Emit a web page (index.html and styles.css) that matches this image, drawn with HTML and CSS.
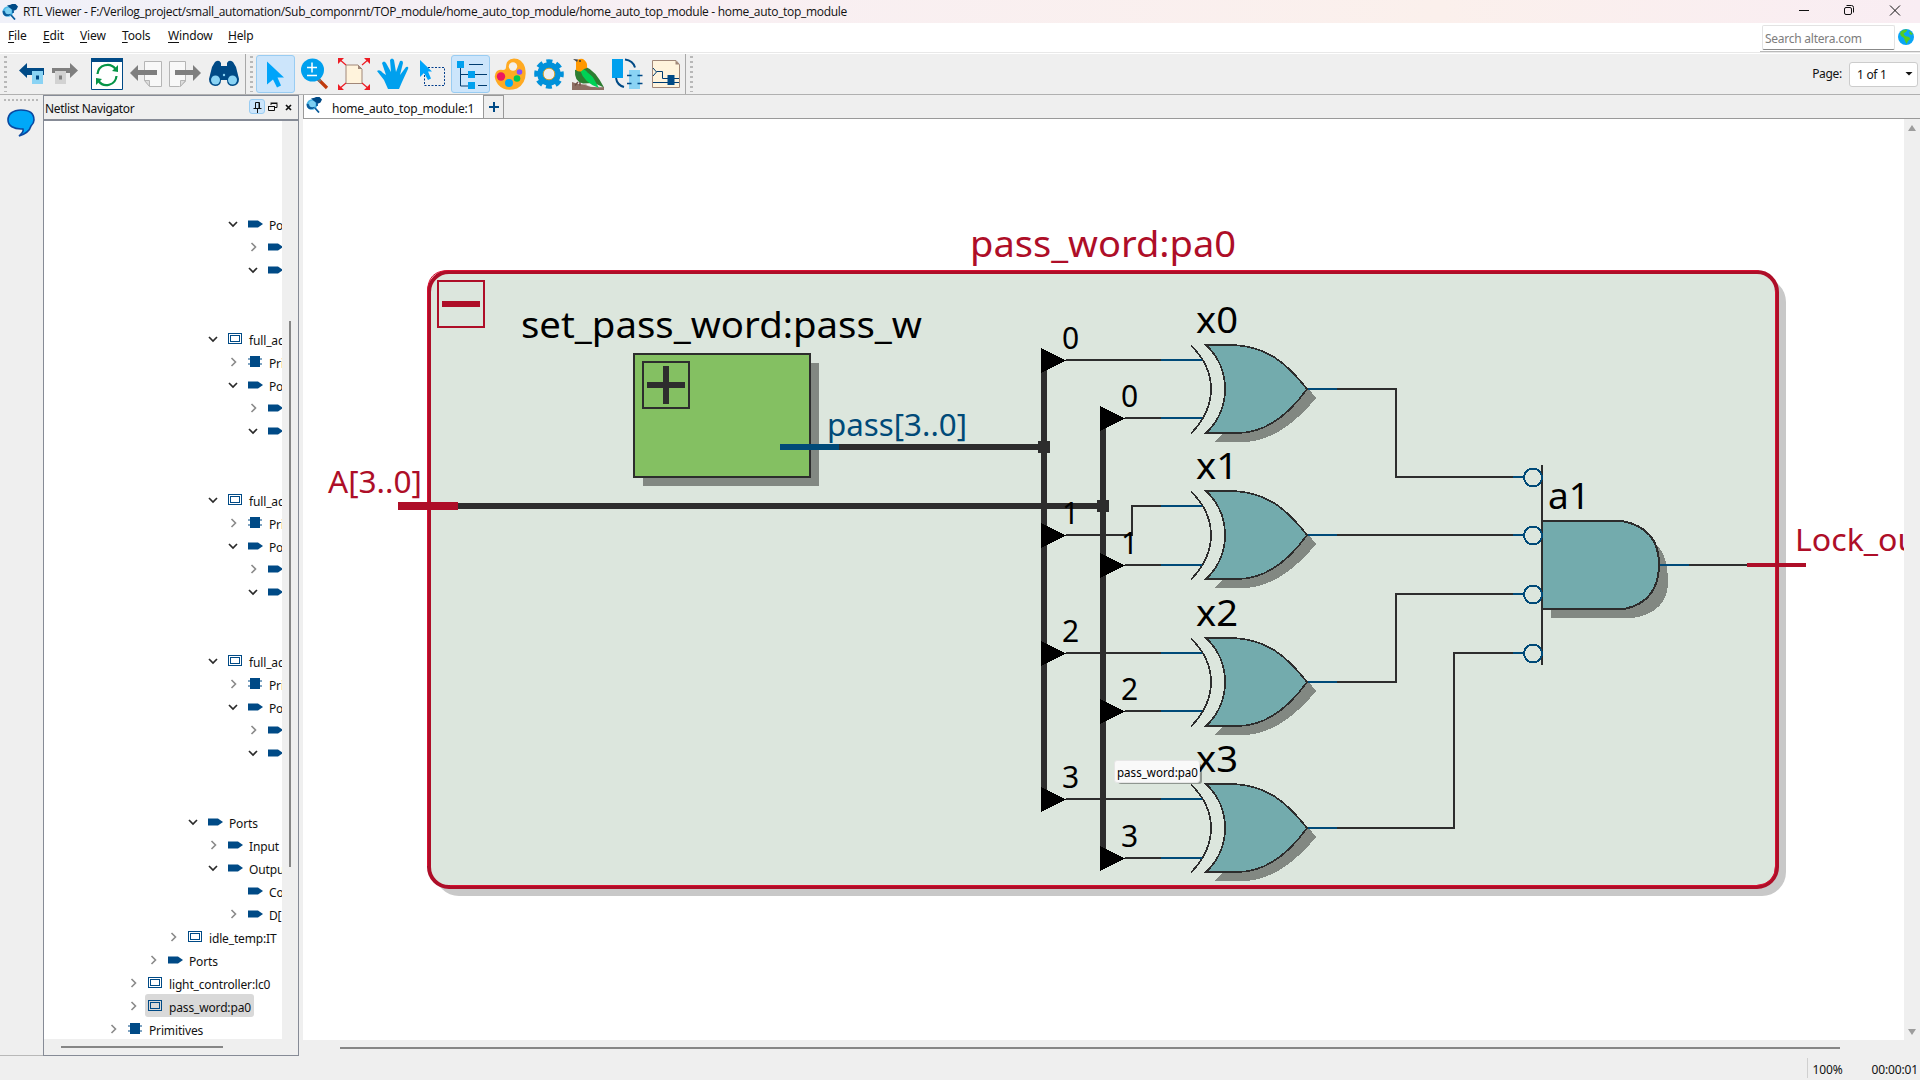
FILE: index.html
```html
<!DOCTYPE html>
<html lang="en">
<head>
<meta charset="utf-8">
<title>RTL Viewer</title>
<link rel="stylesheet" href="styles.css">
</head>
<body>
<svg class="defs" width="0" height="0" aria-hidden="true">
  <symbol id="viewer" viewBox="0 0 16 16"><circle cx="6" cy="7.500" r="5.300" fill="#4cb8e8"/><path d="M.7 6.500a5.300 5.300 0 0 0 3 5.800l3-.3 2.500-2-3-.5-3-2z" fill="#0a5c9c"/><circle cx="6.300" cy="7" r="3.200" fill="#7ed0f2"/><path d="M5 1.500 8.500.8 10 0h3.500L16 2.500l-1.500 3-2 1-2-.5L8 4z" fill="#004a86"/><path d="M11 6v3M9 11l4 4.500" stroke="#0a5c9c" stroke-width="1.800"/></symbol>
  <symbol id="port" viewBox="0 0 15 8"><path d="M0 .5h10l5 3.500-5 3.500H0z" fill="#004a86"/></symbol>
  <symbol id="inst" viewBox="0 0 15 12"><path d="M.5.500h13v10H.5zM2.500 2.500h9v6h-9z" fill="none" stroke="#004a86" shape-rendering="crispEdges"/></symbol>
  <symbol id="chip" viewBox="0 0 15 12"><path d="M2 0h10v11H2zM0 2.500h14v1H0zM0 7.500h14v1H0z" fill="#004a86"/></symbol>
  <symbol id="open" viewBox="0 0 12 12"><path d="m2 4 4 4 4-4" fill="none" stroke="#2a2a2a" stroke-width="1.700"/></symbol>
  <symbol id="shut" viewBox="0 0 12 12"><path d="m4.500 2 4 4-4 4" fill="none" stroke="#8a8a8a" stroke-width="1.600"/></symbol>
</svg>
<div class="app">
  <header class="titlebar">
    <svg class="logo" width="16" height="16"><use href="#viewer"/></svg>
    <span class="title">RTL Viewer - F:/Verilog_project/small_automation/Sub_componrnt/TOP_module/home_auto_top_module/home_auto_top_module - home_auto_top_module</span>
    <svg class="winbtns" width="110" height="23" viewBox="0 0 110 23" fill="none" stroke="#111"><path d="M4 10.500h10"/><rect x="49.500" y="7.500" width="7" height="7" rx="1.500"/><path d="M51.500 5.500h5q2 0 2 2v5"/><path d="m95 5.500 10 10m0-10-10 10"/></svg>
  </header>
  <nav class="menubar">
    <span class="m m1"><u>F</u>ile</span><span class="m m2"><u>E</u>dit</span><span class="m m3"><u>V</u>iew</span><span class="m m4"><u>T</u>ools</span><span class="m m5"><u>W</u>indow</span><span class="m m6"><u>H</u>elp</span>
    <div class="search"><div class="field">Search altera.com</div>
      <svg width="16" height="16" viewBox="0 0 16 16"><circle cx="8" cy="8" r="8" fill="#0aa5f5"/><path d="M3 2.500Q6 0 9.500.8L8 3 5.500 4.500 7 7l4 1 1.500 2L10 12l-1.500 3L7 12 6 9 3 7 2 4.500zM12 2l3 3-2 1-2-2z" fill="#55cc22"/></svg></div>
  </nav>
  <div class="toolbar">
    <i class="grip g1"></i>
    <span class="tool narrow"><svg width="32" height="32" viewBox="0 0 32 32"><path d="M3 12.500 11 5v5h17v7H11v3z" fill="#004a86"/><path d="M16 13h11v13H16z" fill="#8ad3f4"/><path d="M20 17.500h3v4h-3z" fill="#004a86"/></svg></span>
    <span class="tool narrow"><svg width="32" height="32" viewBox="0 0 32 32"><path d="M29 12.500 21 5v5H3v5h18v5z" fill="#7f7f7f"/><path d="M6 13h11v13H6z" fill="#d2d2d2"/><path d="M10 17.500h3v4h-3z" fill="#7f7f7f"/></svg></span>
    <span class="tool first"><svg width="32" height="32" viewBox="0 0 32 32"><path d="M.5.500h31v31H.5z" fill="#fff" stroke="#004a86"/><path d="M0 0h32v4H0z" fill="#004a86"/><path d="M6.500 16a10 10 0 0 1 18-5M25.500 18a10 10 0 0 1-18 5" fill="none" stroke="#069447" stroke-width="2.200"/><path d="m21 13 6 1V7zM11 21l-6-1v7z" fill="#069447"/></svg></span>
    <span class="tool"><svg width="32" height="32" viewBox="0 0 32 32"><path d="M14.500 3.500h17v25H20l-5.500-6z" fill="#f8f8f8" stroke="#b5b5b5"/><path d="M14.500 22.500h5v6z" fill="#ddd" stroke="#b5b5b5"/><path d="m0 15 8-8v5h19v5H8v6z" fill="#7f7f7f"/></svg></span>
    <span class="tool"><svg width="32" height="32" viewBox="0 0 32 32"><path d="M.5 3.500h16v20l-6 5H.5z" fill="#f8f8f8" stroke="#b5b5b5"/><path d="M16.500 22.500h-5v6z" fill="#ddd" stroke="#b5b5b5"/><path d="m32 15-8-8v5H6v5h18v6z" fill="#7f7f7f"/></svg></span>
    <span class="tool"><svg width="32" height="32" viewBox="0 0 32 32"><path d="m1 21 3-12 3-5q4-3 6 1v3h6V5q2-4 6-1l3 5 3 12q0 6-6 7-6 0-6-6h-6q0 6-6 6-6-1-6-7z" fill="#004a86"/><circle cx="7.500" cy="22" r="4.500" fill="#8ad3f4"/><circle cx="24.500" cy="22" r="4.500" fill="#8ad3f4"/><circle cx="16" cy="17" r="1.200" fill="#8ad3f4"/></svg></span>
    <i class="sep s1"></i><i class="grip g2"></i>
    <span class="tool on"><svg width="32" height="32" viewBox="0 0 32 32"><path d="M7 3.500v23l6-5 4 8 4-2-3.500-8H24z" fill="#00a4fa"/></svg></span>
    <span class="tool"><svg width="32" height="32" viewBox="0 0 32 32"><path d="m18 20 10 10" stroke="#c03a0c" stroke-width="3.200"/><path d="m18.500 20.500 3 3" stroke="#777" stroke-width="3"/><circle cx="13.500" cy="12" r="11.500" fill="#00a0ee"/><path d="M8 9.500h10m-5-5v10M8 17.500h10" stroke="#fff" stroke-width="1.500"/></svg></span>
    <span class="tool"><svg width="32" height="32" viewBox="0 0 32 32"><path d="M8 7h12l4 4v14.500H8z" fill="#fff3dc" stroke="#a18778"/><path d="M20 7v4h4z" fill="#a18778"/><path d="m1 1 7 6M31 1l-7 6M1 31l7-6m23 6-7-6" stroke="#ed1c24" stroke-width="1.200"/><path d="M0 0h6L0 6zm32 0h-6l6 6zM0 32h6l-6-6zm32 0h-6l6-6z" fill="#ed1c24"/></svg></span>
    <span class="tool"><svg width="32" height="32" viewBox="0 0 32 32"><path d="M0 13q3-2 6 2l3 2L5 5q2-3 4 0l5 9-1-12q2-3 4 0l2 12 4-11q3-1 3 2l-3 12 6-8q3-1 2 2l-6 13-3 7H11l-4-9z" fill="#00a0ee"/></svg></span>
    <span class="tool"><svg width="32" height="32" viewBox="0 0 32 32"><path d="M8.500 9.500h20v18h-20z" fill="none" stroke="#003c8c" stroke-dasharray="2 1.500"/><path d="M4 2v17l4-4 4 7 3-1.500-3-7h4z" fill="#00a4fa"/></svg></span>
    <span class="tool on"><svg width="32" height="32" viewBox="0 0 32 32"><path d="M5.500 8v20h10M5 16.500h28M14 6.500h14m-5 21h9" fill="none" stroke="#003c70"/><path d="M2 3h7v7H2zM13 13h7v7h-7zM13 24h7v7h-7z" fill="#00a0ee"/></svg></span>
    <span class="tool"><svg width="32" height="32" viewBox="0 0 32 32"><path d="M12 9Q12 1 20 .5q8 0 11 9 3 15-8 21-12 4-19-4Q-2 18 3 13q3-2 6-1 3 0 3-3z" fill="#ffaa22"/><circle cx="19" cy="8.500" r="4.200" fill="#f3efe9"/><circle cx="7" cy="18.500" r="4.200" fill="#ee1760"/><circle cx="15" cy="25" r="4" fill="#00a7f5"/><circle cx="23" cy="20.500" r="3.300" fill="#00c853"/><circle cx="25.500" cy="14" r="2.800" fill="#8350ff"/></svg></span>
    <span class="tool"><svg width="32" height="32" viewBox="0 0 32 32"><circle cx="16" cy="16" r="12.800" fill="none" stroke="#0091da" stroke-width="4" stroke-dasharray="6 4.050" stroke-dashoffset="3"/><circle cx="16" cy="16" r="8.500" fill="#eee" stroke="#0091da" stroke-width="6.500"/><circle cx="16" cy="16" r="5.800" fill="#eee" stroke="#d7a12b"/></svg></span>
    <span class="tool"><svg width="32" height="32" viewBox="0 0 32 32"><path d="M0 24q7 3 14 2.500 4 3 18 2.500v3H0z" fill="#8d6e63"/><path d="M13 27q8 1 14-3l5 5q-12 1-19-2z" fill="#e8e8e8"/><path d="M3 27.500 6 24m2 3.500V24" fill="none" stroke="#704f46" stroke-width="1.500"/><path d="M3 12q-1 12 8 13.500l11-.5 10 4.500Q23 12 14 9z" fill="#2d7d32"/><path d="m9 9 11 8.500 7 12.500Q12 25 8 12z" fill="#00d155"/><path d="m14 9 9 9 4 6-12-10z" fill="#2d7d32"/><path d="M4 4q2-4 7-3 5 3 4 9l-3 1-3 2.500q-6 .5-5-4z" fill="#ff9800"/><path d="m1 1 5 .5-1 2.500z" fill="#444"/><circle cx="8" cy="3" r="1" fill="#333"/></svg></span>
    <span class="tool"><svg width="32" height="32" viewBox="0 0 32 32"><path d="M1 1h11v19H1z" fill="#00a0ee"/><path d="M14 1.500q8 1 10 8M5 20q1 7 8 9" fill="none" stroke="#004a86" stroke-width="2"/><path d="M18 12h11v19H18z" fill="#8ad3f4"/><path d="M16 17.500h4.500m-4.500 8h4.500m6-8h5m-5 8h5" stroke="#004a86" stroke-width="1.500"/></svg></span>
    <span class="tool"><svg width="32" height="32" viewBox="0 0 32 32"><path d="M2.500 2.500H26l3.500 4v23h-27z" fill="#fff3dc" stroke="#a18778"/><path d="M25.500 2.500v4h4z" fill="#a18778"/><path d="M3 24.500h26M3 10l3.500 4L3 18M6.500 13.500h6v7H29" fill="none" stroke="#003c70"/><path d="M17.500 17h7v10h-7z" fill="#004a86"/></svg></span>
    <i class="sep s2"></i><i class="grip g3"></i>
    <div class="page"><span>Page:</span><div class="combo">1 of 1<b></b></div></div>
  </div>
  <main class="work">
    <aside class="strip"><i class="hgrip"></i><svg width="28" height="30" viewBox="0 0 28 30"><path d="M14 1C6 1 1 5 1 11c0 6 6 9 13 9h2q1 3-4 7 10-3 12-10 3-3 3-6 0-10-13-10z" fill="#00a8f8" stroke="#0a48a0" stroke-width="1.600"/></svg></aside>
    <section class="dock">
      <div class="dockhead"><span>Netlist Navigator</span>
        <b class="pin"><svg width="16" height="15" viewBox="0 0 16 15" fill="none" stroke="#111"><path d="M6.500 8V2.500h4V8M4.500 8.500h8M8.500 8.500V13M10 3v5"/></svg></b>
        <svg class="flt" width="10" height="10" viewBox="0 0 10 10" fill="none" stroke="#111"><path d="M.5 4.500h6v4h-6zM3 3V1.500h6v4H7M0 4.500h7M2.500 1h7"/></svg>
        <svg class="cls" width="7" height="7" viewBox="0 0 7 7"><path d="m1 1 5 5m0-5-5 5" stroke="#111" stroke-width="1.700"/></svg>
      </div>
      <div class="dockbody">
        <div class="tree" id="tree"></div>
        <i class="vthumb"></i>
      </div>
      <div class="dockfoot"><i></i></div>
    </section>
    <section class="view">
      <div class="tabs"><div class="tab"><svg width="16" height="16"><use href="#viewer"/></svg><span>home_auto_top_module:1</span></div><div class="add"><svg width="10" height="10" viewBox="0 0 10 10"><path d="M5 0v10M0 5h10" stroke="#004a86" stroke-width="2"/></svg></div></div>
      <div class="canvasrow">
        <svg class="canvas" width="1601" height="921" viewBox="303 119 1601 921">
          <defs>
            <g id="xor">
              <path d="M1215 442q16-15 19-30l26-14 49-9 7 9q-36 44-74 44z" fill="#828882"/>
              <path d="M1206 345h28C1266 347 1285 361 1307 389 1285 420 1262 433 1237 433h-31Q1225 415 1225 389T1206 345z" fill="#73abad" stroke="#2d2d2d" stroke-width="1.700"/>
              <path d="M1191 345.500Q1211 365 1211 389T1191 433.500" fill="none" stroke="#2d2d2d" stroke-width="1.700"/>
              <path d="M1308 389h29M1161 360h41" stroke="#004a78" stroke-width="2"/>
            </g>
            <path id="tap" d="M0-12.500 25 0 0 12.500z"/>
          </defs>
          <rect x="435" y="278" width="1351" height="618" rx="24" fill="#c8c8c8"/>
          <rect x="429" y="272" width="1348" height="615" rx="20" fill="#dce6dd" stroke="#ae0e28" stroke-width="4"/>
          <path d="M427.500 866V292q0-21.500 21-21.500h1310M1775.500 290v576q0 18-19 19.500H450" fill="none" stroke="#d80f31" stroke-width="1"/>
          <g shape-rendering="crispEdges">
            <path d="M438 281h46v46h-46z" fill="none" stroke="#ae0e28" stroke-width="2"/><path d="M442 301h38v6h-38z" fill="#ae0e28"/>
            <path d="M643 363h176v123H643z" fill="#828882"/>
            <path d="M634 354h176v123H634z" fill="#84c062" stroke="#2d2d2d" stroke-width="2"/>
            <path d="M643 362h46v46h-46z" fill="none" stroke="#2d2d2d" stroke-width="2"/>
            <path d="M647 382h38v6h-38zM663 366h6v38h-6z" fill="#2d2d2d"/>
            <g fill="none" stroke="#2d2d2d" stroke-width="6"><path d="M839 447h205M458 506h645M1044 360v439M1103 418v440"/></g>
            <path d="M1038 441h12v12h-12zM1097 500h12v12h-12z" fill="#2d2d2d"/>
            <g fill="none" stroke="#2d2d2d" stroke-width="2">
              <path d="M1066 360h95M1066 535h66v-29h29M1066 653h95M1066 799h95M1125 418h36M1125 565h36M1125 711h36M1125 858h36"/>
              <path d="M1337 389h59v88h117M1337 535h176M1337 682h59v-88h117M1337 828h117V653h59M1689 565h58"/>
            </g>
            <path d="M780 447h59" stroke="#004a78" stroke-width="6"/>
            <path d="M398 506h60" stroke="#ae0e28" stroke-width="8"/>
            <use href="#tap" x="1041" y="360.500"/><use href="#tap" x="1041" y="535.500"/><use href="#tap" x="1041" y="653.500"/><use href="#tap" x="1041" y="799.500"/>
            <use href="#tap" x="1100" y="418.500"/><use href="#tap" x="1100" y="565.500"/><use href="#tap" x="1100" y="711.500"/><use href="#tap" x="1100" y="858.500"/>
            <use href="#xor"/><use href="#xor" y="146"/><use href="#xor" y="293"/><use href="#xor" y="439"/>
            <path d="M1161 418h41M1161 565h41M1161 711h41M1161 858h41" stroke="#004a78" stroke-width="2"/>
            <path d="M1551 610h71l34-44v-22q12 12 12 38 0 30-35 36h-82z" fill="#828882"/>
            <path d="M1542 521h80q37 7 37 43 0 38-35 45h-82z" fill="#73abad" stroke="#2d2d2d" stroke-width="2"/>
            <path d="M1542 465v200" stroke="#2d2d2d" stroke-width="2"/>
            <g fill="none" stroke="#004a78" stroke-width="2"><circle cx="1533" cy="477.500" r="9"/><circle cx="1533" cy="535.500" r="9"/><circle cx="1533" cy="594.500" r="9"/><circle cx="1533" cy="653.500" r="9"/><path d="M1513 477h11M1513 535h11M1513 594h11M1513 653h11M1660 565h29"/></g>
            <path d="M1747 565h59" stroke="#ae0e28" stroke-width="4"/>
          </g>
          <g class="big">
            <text class="red" x="970" y="256.500" textLength="266" lengthAdjust="spacingAndGlyphs">pass_word:pa0</text>
            <text x="521" y="338" textLength="401" lengthAdjust="spacingAndGlyphs">set_pass_word:pass_w</text>
            <text x="1196" y="332.500" textLength="42" lengthAdjust="spacingAndGlyphs">x0</text><text x="1196" y="479" textLength="42" lengthAdjust="spacingAndGlyphs">x1</text><text x="1196" y="625.500" textLength="42" lengthAdjust="spacingAndGlyphs">x2</text><text x="1196" y="771.500" textLength="42" lengthAdjust="spacingAndGlyphs">x3</text>
            <text x="1548" y="509" textLength="42" lengthAdjust="spacingAndGlyphs">a1</text>
          </g>
          <g class="mid">
            <text class="red" x="328" y="492.500" textLength="94" lengthAdjust="spacingAndGlyphs">A[3..0]</text>
            <text class="blue" x="827" y="435.500" textLength="140" lengthAdjust="spacingAndGlyphs">pass[3..0]</text>
            <text class="red" x="1795" y="550.500" textLength="134" lengthAdjust="spacingAndGlyphs">Lock_out</text>
            <text x="1062" y="348.500">0</text><text x="1062" y="524">1</text><text x="1062" y="641.500">2</text><text x="1062" y="787.500">3</text>
            <text x="1121" y="406.500">0</text><text x="1121" y="553.500">1</text><text x="1121" y="699.500">2</text><text x="1121" y="846.500">3</text>
          </g>
          <g class="tip"><rect x="1118" y="764" width="84" height="20" rx="3" fill="#000" opacity=".35"/><rect x="1114.500" y="760.500" width="85" height="22" rx="2.500" fill="#f9f9f9" stroke="#e6e6e6"/><text x="1117" y="777" textLength="81" lengthAdjust="spacingAndGlyphs">pass_word:pa0</text></g>
        </svg>
        <div class="vbar"><i class="up"></i><i class="down"></i></div>
      </div>
      <div class="hbar"><i></i></div>
    </section>
  </main>
  <footer class="status"><span class="pct">100%</span><span class="time">00:00:01</span></footer>
</div>
<script src="tree.js"></script>
</body>
</html>
```
FILE: tree.js
```js
// Each entry: [depth, arrow (open / shut / none), icon, label]; null is an empty row.
const adder = [
  [5, 'open', 'inst', 'full_adder'], [6, 'shut', 'chip', 'Prim'], [6, 'open', 'port', 'Po'],
  [7, 'shut', 'port', ''], [7, 'open', 'port', ''], null, null
];
const rows = [
  null, null, null, null,
  [6, 'open', 'port', 'Po'], [7, 'shut', 'port', ''], [7, 'open', 'port', ''], null, null,
  ...adder, ...adder, ...adder,
  [4, 'open', 'port', 'Ports'], [5, 'shut', 'port', 'Input'], [5, 'open', 'port', 'Output'],
  [6, '', 'port', 'Co'], [6, 'shut', 'port', 'D['], [3, 'shut', 'inst', 'idle_temp:IT'],
  [2, 'shut', 'port', 'Ports'], [1, 'shut', 'inst', 'light_controller:lc0'],
  [1, 'shut', 'inst', 'pass_word:pa0', true], [0, 'shut', 'chip', 'Primitives']
];
document.getElementById('tree').innerHTML = rows.map(r => {
  if (!r) return '<div class="row"></div>';
  const [depth, arrow, icon, label, selected] = r;
  const h = icon === 'port' ? 8 : 12;
  return `<div class="row" style="padding-left:${63 + depth * 20}px">` +
    `<svg class="arrow" width="12" height="12">${arrow ? `<use href="#${arrow}"/>` : ''}</svg>` +
    `<span class="item${selected ? ' sel' : ''}"><svg width="15" height="${h}"><use href="#${icon}"/></svg><span class="lbl">${label}</span></span></div>`;
}).join('');
```
FILE: styles.css
```css
* { box-sizing: border-box; }
body { margin: 0; background: #efefef; color: #111; font: 12px/16px "Noto Sans", "Open Sans", sans-serif; overflow: hidden; }
svg { flex: none; display: block; }
.defs { position: absolute; }
.app { width: 1920px; height: 1080px; display: flex; flex-direction: column; }

.titlebar { height: 23px; display: flex; align-items: center; padding: 0 15px 0 2px; background: linear-gradient(90deg, #f0f1f9, #f8eff3 35%, #fbf0ec 75%, #f9edf3); }
.logo { margin-right: 5px; }
.title { font-family: "Open Sans", sans-serif; font-size: 12px; letter-spacing: -.31px; white-space: nowrap; padding-top: 1px; }
.winbtns { margin-left: auto; }

.menubar { height: 30px; background: #fff; display: flex; border-bottom: 1px solid #e8e8e8; padding-left: 8px; }
.m { padding-top: 5px; letter-spacing: -.15px; }
.m1 { width: 35px; } .m2 { width: 37px; } .m3 { width: 42px; } .m4 { width: 46px; } .m5 { width: 60px; }
.m u { text-underline-offset: 2px; }
.search { margin-left: auto; width: 160px; height: 29px; display: flex; gap: 3px; align-items: flex-start; border-bottom: 1px solid #b9b9b9; padding: 2px 0 0 2px; }
.search > svg { margin-top: 4px; }
.field { width: 133px; height: 25px; border: 1px solid #e3e3e3; border-bottom-color: #888; border-radius: 2px; color: #7d7d7d; padding: 5px 2px; letter-spacing: -.25px; }

.toolbar { height: 42px; display: flex; align-items: center; border-top: 1px solid #fff; border-bottom: 1px solid #b0b0b0; }
.grip { width: 3px; height: 36px; background: repeating-linear-gradient(#b8b8b8 0 2px, transparent 2px 5px); }
.g1 { margin: 0 8px 0 4px; } .g2 { margin: 0 3px 0 4px; } .g3 { margin-left: 4px; }
.sep { width: 1px; height: 40px; background: #a8a8a8; }
.s1 { margin-left: 2px; }
.tool { width: 39px; height: 38px; display: flex; align-items: center; justify-content: center; border: 1px solid transparent; border-radius: 3px; }
.narrow { width: 33px; }
.first { margin-left: 6px; }
.on { background: #cce5fb; border-color: #99ccf2; }
.page { margin-left: auto; display: flex; align-items: center; gap: 7px; padding-right: 2px; letter-spacing: -.3px; }
.combo { width: 69px; height: 25px; background: #fff; border: 1px solid #ccc; border-radius: 3px; padding: 4px 4px 0 7px; display: flex; justify-content: space-between; }
.combo b { width: 8px; height: 4px; margin-top: 5px; background: #111; clip-path: polygon(0 0, 100% 0, 50% 100%); }

.work { flex: 1; display: flex; min-height: 0; }
.strip { width: 43px; padding: 4px 0 0 4px; border-bottom: 1px solid #b8b8b8; }
.hgrip { display: block; width: 35px; height: 2px; background: repeating-linear-gradient(90deg, #b8b8b8 0 2px, transparent 2px 4px); }
.strip svg { margin: 8px 0 0 3px; }
.dock { width: 256px; border: 1px solid #868b96; display: flex; flex-direction: column; margin-right: 4px; }
.dockhead { height: 25px; border-bottom: 2px solid #868b96; display: flex; align-items: center; padding: 2px 6px 0 1px; }
.dockhead span { margin-right: auto; letter-spacing: -.35px; }
.pin { background: #cce5fb; border: 1px solid #99ccf2; border-radius: 3px; width: 16px; height: 15px; display: flex; justify-content: center; overflow: hidden; margin: -4px 3px 0 0; }
.flt { margin: -3px 7px 0 0; } .cls { margin-top: -2px; }
.dockbody { height: 918px; display: flex; }
.tree { width: 238px; background: #fff; overflow: hidden; }
.row { height: 23px; display: flex; align-items: center; }
.row:first-child { height: 22px; }
.arrow { margin-right: 6px; }
.item { display: flex; align-items: center; height: 23px; white-space: nowrap; padding: 0 3px; border-radius: 3px; }
.item.sel { background: #d9d9d9; }
.lbl { margin-left: 6px; padding-top: 4px; letter-spacing: -.15px; }
.vthumb { width: 2px; height: 546px; margin: 200px 0 0 7px; background: #868686; }
.dockfoot { padding: 7px 0 0 17px; }
.dockfoot i { display: block; width: 162px; height: 2px; background: #868686; }

.view { flex: 1; display: flex; flex-direction: column; min-width: 0; }
.tabs { height: 24px; display: flex; border-bottom: 1px solid #999; }
.tab { width: 180px; background: #fff; display: flex; align-items: flex-start; border-left: 1px solid #999; padding: 2px 0 0 2px; }
.tab span { margin: 4px 0 0 10px; letter-spacing: -.2px; }
.add { width: 21px; border: 1px solid #999; border-width: 1px 1px 0 1px; display: flex; align-items: center; justify-content: center; }
.canvasrow { display: flex; height: 921px; }
.canvas { background: #fff; }
.canvas text { font-family: "Noto Sans", sans-serif; fill: #000; }
.canvas .big text { font-size: 36px; }
.canvas .mid text { font-size: 30px; }
.canvas .red { fill: #ae0e28; }
.canvas .blue { fill: #004a78; }
.canvas .tip text { font-size: 12px; }
.vbar { width: 16px; display: flex; flex-direction: column; justify-content: space-between; align-items: center; padding: 6px 0 5px; }
.up, .down { width: 8px; height: 6px; background: #9d9d9d; clip-path: polygon(50% 0, 100% 100%, 0 100%); }
.down { clip-path: polygon(0 0, 100% 0, 50% 100%); }
.hbar { padding: 7px 0 0 37px; }
.hbar i { display: block; width: 1500px; height: 2px; background: #868686; }

.status { height: 24px; display: flex; justify-content: flex-end; padding: 2px 2px 2px 0; }
.pct { border-left: 1px solid #d0d0d0; padding: 4px 0 0 5px; width: 65px; letter-spacing: -.1px; }
.time { padding-top: 4px; white-space: nowrap; letter-spacing: -.15px; }
```
